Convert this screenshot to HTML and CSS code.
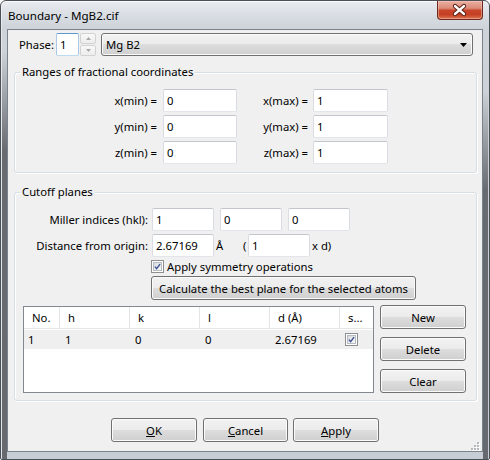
FILE: index.html
```html
<!DOCTYPE html>
<html>
<head>
<meta charset="utf-8">
<title>Boundary - MgB2.cif</title>
<link rel="stylesheet" href="styles.css">
</head>
<body>
<div class="window">
  <div class="titlebar">
    <span class="title">Boundary - MgB2.cif</span>
    <div class="close">
      <svg width="46" height="19" viewBox="0 0 46 19">
        <path d="M18.5 5 L27.5 13 M27.5 5 L18.5 13" stroke="#5a2216" stroke-width="4.6" stroke-linecap="round" fill="none"/>
        <path d="M18.5 5 L27.5 13 M27.5 5 L18.5 13" stroke="#ffffff" stroke-width="2.6" stroke-linecap="round" fill="none"/>
      </svg>
    </div>
  </div>
  <div class="client">
    <div class="phase-row">
      <span class="phase-label">Phase:</span>
      <div class="tb spin-input">1</div>
      <div class="spin">
        <div class="sb"><svg width="5" height="3" viewBox="0 0 5 3"><polygon points="0,3 5,3 2.5,0" fill="#a8a8a8"/></svg></div>
        <div class="sb"><svg width="5" height="3" viewBox="0 0 5 3"><polygon points="0,0 5,0 2.5,3" fill="#a8a8a8"/></svg></div>
      </div>
      <div class="combo">
        <span class="combo-text">Mg B2</span>
        <svg class="combo-arrow" width="7" height="4" viewBox="0 0 7 4"><polygon points="0,0 7,0 3.5,4" fill="#000"/></svg>
      </div>
    </div>

    <div class="group g1">
      <div class="group-title">Ranges of fractional coordinates</div>
      <div class="coords">
        <span class="lbl">x(min) =</span><div class="tb">0</div><span class="lbl lbl-r">x(max) =</span><div class="tb">1</div>
        <span class="lbl">y(min) =</span><div class="tb">0</div><span class="lbl lbl-r">y(max) =</span><div class="tb">1</div>
        <span class="lbl">z(min) =</span><div class="tb">0</div><span class="lbl lbl-r">z(max) =</span><div class="tb">1</div>
      </div>
    </div>

    <div class="group g2">
      <div class="group-title">Cutoff planes</div>
      <div class="row first">
        <span class="rlbl">Miller indices (hkl):</span>
        <div class="tb w62">1</div>
        <div class="tb w62 mi">0</div>
        <div class="tb w62 mi">0</div>
      </div>
      <div class="row">
        <span class="rlbl">Distance from origin:</span>
        <div class="tb w62">2.67169</div>
        <span class="unit">Å</span>
        <span class="paren">(</span>
        <div class="tb w62">1</div>
        <span class="xd">x d)</span>
      </div>
      <div class="check-row">
        <span class="cb"><svg width="9" height="9" viewBox="0 0 9 9"><path d="M1.2 4.6 L3.4 7.2 L7.8 1.4" stroke="#3d4f8c" stroke-width="1.8" fill="none"/></svg></span>
        <span class="check-text">Apply symmetry operations</span>
      </div>
      <div class="btn calc">Calculate the best plane for the selected atoms</div>
      <div class="list-area">
        <div class="list">
          <div class="lhead">
            <span class="hc c1">No.</span>
            <span class="hc c2">h</span>
            <span class="hc c2">k</span>
            <span class="hc c2">l</span>
            <span class="hc c2">d (Å)</span>
            <span class="hc c6">s...</span>
          </div>
          <div class="lrow">
            <span class="dc c1">1</span>
            <span class="dc c2">1</span>
            <span class="dc c2">0</span>
            <span class="dc c2">0</span>
            <span class="dc c2">2.67169</span>
            <span class="dc c6"><span class="cb small"><svg width="9" height="9" viewBox="0 0 9 9"><path d="M1.2 4.6 L3.4 7.2 L7.8 1.4" stroke="#3d4f8c" stroke-width="1.8" fill="none"/></svg></span></span>
          </div>
        </div>
        <div class="side-btns">
          <div class="btn side">New</div>
          <div class="btn side">Delete</div>
          <div class="btn side">Clear</div>
        </div>
      </div>
    </div>

    <div class="dlg-btns">
      <div class="btn dlg"><u>O</u>K</div>
      <div class="btn dlg cancel"><u>C</u>ancel</div>
      <div class="btn dlg apply"><u>A</u>pply</div>
    </div>

    <svg class="grip" width="10" height="10" viewBox="0 0 10 10">
      <g fill="#ffffff">
        <rect x="8" y="2" width="2" height="2"/>
        <rect x="8" y="5" width="2" height="2"/><rect x="5" y="5" width="2" height="2"/>
        <rect x="8" y="8" width="2" height="2"/><rect x="5" y="8" width="2" height="2"/><rect x="2" y="8" width="2" height="2"/>
      </g>
      <g fill="#b4b8bd">
        <rect x="7" y="1" width="2" height="2"/>
        <rect x="7" y="4" width="2" height="2"/><rect x="4" y="4" width="2" height="2"/>
        <rect x="7" y="7" width="2" height="2"/><rect x="4" y="7" width="2" height="2"/><rect x="1" y="7" width="2" height="2"/>
      </g>
    </svg>
  </div>
</div>
</body>
</html>
```

FILE: styles.css
```css
html, body {
  margin: 0;
  padding: 0;
  background: #ffffff;
}

body {
  font-family: "Noto Sans", "DejaVu Sans", sans-serif;
  font-size: 11.3px;
  color: #000;
}

.window {
  width: 490px;
  height: 460px;
  box-sizing: border-box;
  border: 1px solid #4b5057;
  border-radius: 6px 6px 2px 2px;
  display: flex;
  flex-direction: column;
  overflow: hidden;
  background:
    linear-gradient(to bottom, rgba(70, 72, 76, 0) 50px, rgba(70, 72, 76, 0.75) 150px) left 1px top 0 / 5px 100% no-repeat,
    linear-gradient(to bottom, rgba(70, 72, 76, 0) 90px, rgba(70, 72, 76, 0.75) 190px) right 1px top 0 / 5px 100% no-repeat,
    linear-gradient(to bottom, #e9ecf0 0, #d7dce2 16px, #cdd3d9 28px, #c7cdd4 100%);
  box-shadow: inset 0 1px 0 rgba(255, 255, 255, 0.8), inset 1px 0 0 rgba(255, 255, 255, 0.5);
}

.titlebar {
  height: 28px;
  flex: none;
  display: flex;
  align-items: center;
  padding-left: 7px;
}

.title {
  font-size: 11.6px;
  line-height: 16px;
  margin-top: 1px;
}

.close {
  align-self: flex-start;
  margin-left: auto;
  margin-right: 6px;
  width: 46px;
  height: 19px;
  box-sizing: border-box;
  border: 1px solid #6a2a1d;
  border-top: none;
  border-radius: 0 0 4px 4px;
  background: linear-gradient(to bottom, #eab0a2 0%, #dc8a78 40%, #c8452c 52%, #c53f22 75%, #dc7350 100%);
  box-shadow: inset 0 0 0 1px rgba(255, 210, 200, 0.45);
  display: flex;
}

.close svg {
  margin-left: -1px;
}

.client {
  flex: 1;
  margin: 0 6px 7px 6px;
  border: 1px solid #7a838c;
  background: #f0f0f0;
  position: relative;
  display: flex;
  flex-direction: column;
}

/* phase row */
.phase-row {
  display: flex;
  align-items: center;
  height: 23px;
  margin-top: 3px;
  padding: 0 9px 0 11px;
}

.phase-label {
  width: 37px;
  flex: none;
}

.tb {
  box-sizing: border-box;
  height: 23px;
  background: #ffffff;
  border: 1px solid;
  border-color: #c3c7cd #d9dde3 #e2e6eb #d9dde3;
  border-radius: 2px;
  padding-left: 3px;
  line-height: 21px;
  flex: none;
}

.spin-input {
  width: 23px;
  border-color: #5d97cf #a8c8e6 #bcdaf1 #a8c8e6;
}

.spin {
  margin-left: 1px;
  width: 16px;
  height: 23px;
  display: flex;
  flex-direction: column;
  gap: 1px;
  flex: none;
}

.sb {
  flex: 1;
  box-sizing: border-box;
  border: 1px solid #d2d2d2;
  border-radius: 2px;
  background: linear-gradient(to bottom, #f8f8f8, #ededed);
  display: flex;
  align-items: center;
  justify-content: center;
}

.combo {
  margin-left: 5px;
  flex: 1;
  height: 23px;
  box-sizing: border-box;
  border: 1px solid #707070;
  border-radius: 3px;
  background: linear-gradient(to bottom, #f2f2f2 0%, #ebebeb 50%, #dddddd 50%, #cfcfcf 100%);
  box-shadow: inset 0 0 0 1px #fbfbfb;
  display: flex;
  align-items: center;
  padding: 0 5px 0 4px;
}

.combo-text {
  flex: 1;
}

/* group boxes */
.group {
  border: 1px solid #d5dfe5;
  border-radius: 3px;
  box-shadow: inset 1px 1px 0 #ffffff, 1px 1px 0 #ffffff;
}

.group-title {
  width: max-content;
  height: 16px;
  line-height: 16px;
  margin: -9px 0 0 5px;
  padding: 0 2px;
  background: #f0f0f0;
}

.g1 {
  margin: 16px 5px 0 6px;
  padding-bottom: 8px;
}

.coords {
  display: grid;
  grid-template-columns: 148px 74px 76px 75px;
  row-gap: 3px;
  margin-top: 9px;
}

.lbl {
  text-align: right;
  padding-right: 6px;
  line-height: 23px;
}

.lbl-r {
  padding-right: 5px;
}

.g2 {
  margin: 19px 5px 0 6px;
  padding: 0 9px 7px 0;
}

.row {
  display: flex;
  align-items: center;
  height: 23px;
  margin-top: 3px;
}

.row.first {
  margin-top: 8px;
}

.rlbl {
  width: 137px;
  box-sizing: border-box;
  padding-right: 4px;
  text-align: right;
  flex: none;
}

.w62 {
  width: 62px;
}

.mi {
  margin-left: 6px;
}

.unit {
  width: 27px;
  margin-left: 2px;
  flex: none;
}

.paren {
  width: 5px;
  flex: none;
}

.xd {
  margin-left: 2px;
}

.check-row {
  display: flex;
  align-items: center;
  height: 13px;
  line-height: 13px;
  margin: 3px 0 0 136px;
}

.cb {
  width: 13px;
  height: 13px;
  box-sizing: border-box;
  border: 1px solid #8e8f8f;
  background: #ffffff;
  padding: 1px;
  display: flex;
  flex: none;
}

.cb svg {
  box-sizing: border-box;
  width: 9px;
  height: 9px;
  background: linear-gradient(135deg, #d7dadf 0%, #eef0f2 70%, #f6f7f8 100%);
  border: 1px solid #b7bcc4;
  overflow: visible;
}

.check-text {
  margin-left: 3px;
}

/* buttons */
.btn {
  box-sizing: border-box;
  border: 1px solid #707070;
  border-radius: 3px;
  background: linear-gradient(to bottom, #f2f2f2 0%, #ebebeb 50%, #dddddd 50%, #cfcfcf 100%);
  box-shadow: inset 0 0 0 1px #fbfbfb;
  display: flex;
  align-items: center;
  justify-content: center;
  white-space: nowrap;
}

.calc {
  width: 265px;
  height: 24px;
  margin: 3px 0 0 136px;
}

.list-area {
  display: flex;
  align-items: flex-start;
  margin: 6px 0 0 8px;
}

.list {
  box-sizing: border-box;
  width: 351px;
  height: 87px;
  border: 1px solid #828790;
  background: #ffffff;
  flex: none;
}

.lhead {
  display: flex;
  height: 22px;
  box-sizing: border-box;
  border-bottom: 1px solid #e5e5e5;
}

.hc {
  box-sizing: border-box;
  border-right: 1px solid #e5e5e5;
  padding-left: 8px;
  line-height: 21px;
  flex: none;
}

.c1 { width: 36px; }
.c2 { width: 70px; }
.c6 { width: 33px; border-right: none; }

.lrow {
  display: flex;
  height: 19px;
  margin-top: 1px;
  background: #efefef;
  line-height: 19px;
}

.dc {
  box-sizing: border-box;
  padding-left: 5px;
  flex: none;
}

.dc.c1 { padding-left: 4px; }

.dc.c6 {
  display: flex;
  align-items: center;
}

.side-btns {
  display: flex;
  flex-direction: column;
  gap: 8px;
  margin: -1px 0 0 6px;
}

.side {
  width: 86px;
  height: 24px;
}

.dlg-btns {
  display: flex;
  margin-top: 17px;
  padding-left: 103px;
}

.dlg {
  width: 86px;
  height: 24px;
}

.dlg.cancel {
  width: 85px;
  margin-left: 6px;
}

.dlg.apply {
  margin-left: 5px;
}

.dlg u {
  text-decoration: underline;
  text-underline-offset: 1px;
}

.grip {
  position: absolute;
  right: 2px;
  bottom: 0;
}
```
